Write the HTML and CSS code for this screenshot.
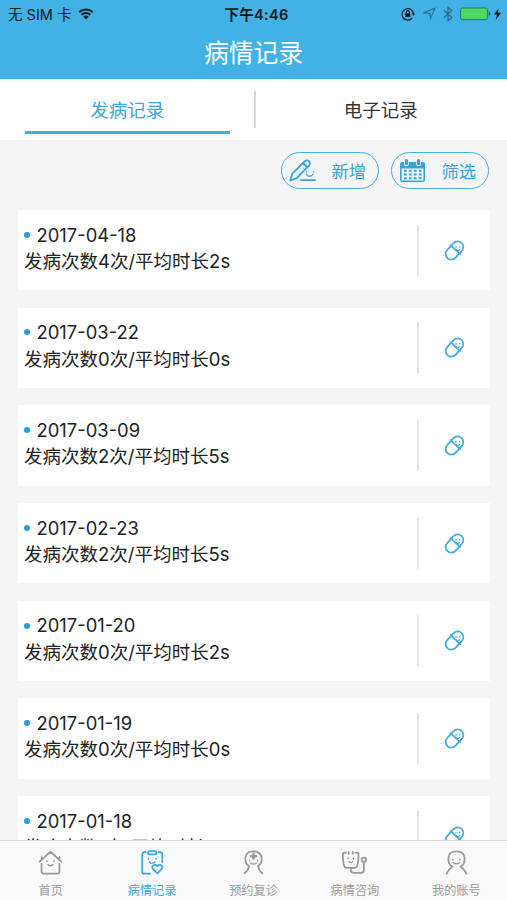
FILE: index.html
```html
<!DOCTYPE html>
<html lang="zh-CN">
<head>
    <meta charset="UTF-8">
    <meta name="viewport" content="width=device-width, initial-scale=1.0">
    <title>病情记录</title>
    <link rel="stylesheet" href="styles.css">
</head>
<body>
    <svg class="sprite" width="0" height="0">
        <symbol id="icon-pill" viewBox="0 0 24 24">
            <g transform="rotate(43 12 12)" fill="none" stroke="currentColor" stroke-width="1.8">
                <rect x="6.1" y="1.2" width="11.8" height="21.6" rx="5.9"/>
                <path d="M4.4 10.7h15.2"/>
            </g>
            <path d="M13.6 7.2v1.8M17.3 7.3v1.6M13.5 10.8c.8 1.8 3.1 1.7 3.9-.2" fill="none" stroke="currentColor" stroke-width="1.2"/>
        </symbol>
    </svg>
    <div class="app">
        <header class="header">
            <div class="status-bar">
                <div class="status-left">
                    <span>无 SIM 卡</span>
                    <svg class="wifi" width="16" height="12" viewBox="0 0 16 12">
                        <path d="M1.2 4.2a9.7 9.7 0 0 1 13.6 0M3.6 6.8a6.3 6.3 0 0 1 8.8 0" fill="none" stroke="#0b1a22" stroke-width="2"/>
                        <path d="M5.4 8.7a3.7 3.7 0 0 1 5.2 0L8 11.5z" fill="#0b1a22"/>
                    </svg>
                </div>
                <div class="status-time">下午4:46</div>
                <div class="status-right">
                    <svg width="15" height="14" viewBox="0 0 15 14" fill="none" stroke="#0b1a22" stroke-width="1.2">
                        <path d="M11.2 11a5.7 5.7 0 1 1 1.3-4"/>
                        <path d="M10.8 6.4h3.4l-1.7 2.3z" fill="#0b1a22" stroke="none"/>
                        <path d="M5.3 6.5V5.2a1.5 1.5 0 0 1 3 0v1.3"/>
                        <path d="M4.3 6.3h5v3.6h-5z" fill="#0b1a22" stroke="none"/>
                    </svg>
                    <svg width="13" height="13" viewBox="0 0 13 13" fill="none" stroke="#2c6d8e" stroke-width="1.1">
                        <path d="M11.9 1.2L7.6 11.6 6.7 6.4 1 5.7z"/>
                    </svg>
                    <svg width="10" height="16" viewBox="0 0 10 16" fill="none" stroke="#2c6d8e" stroke-width="1.3">
                        <path d="M.8 4.3l8 7.2L5 14.8V1.2l3.8 3.3-8 7.2"/>
                    </svg>
                    <svg width="42" height="14" viewBox="0 0 42 14">
                        <rect x=".6" y="1" width="27" height="11.6" rx="2" fill="#4cd964" stroke="#23766f"/>
                        <path d="M28.8 5c2 .3 2 3.3 0 3.6z" fill="#174b5d"/>
                        <path d="M38.8 1.2L34 7.6h3L35.800 12.800l5.200-7h-3.200z" fill="#0b1a22"/>
                    </svg>
                </div>
            </div>
            <h1 class="title">病情记录</h1>
        </header>

        <nav class="tabs">
            <div class="tab active"><span>发病记录</span></div>
            <div class="tab"><span>电子记录</span></div>
        </nav>

        <main class="content">
            <div class="actions">
                <button class="action-button">
                    <svg width="28" height="24" viewBox="0 0 28 24" fill="none" stroke="currentColor" stroke-width="1.8" stroke-linecap="round" stroke-linejoin="round">
                        <path d="M1.3 21.6l1.9-6.8L15.6 2.4a2.9 2.9 0 0 1 4.4-.2 3 3 0 0 1-.2 4.5L7.8 19.2z"/>
                        <path d="M14 4l4.3 4.3M12 21.2h14"/>
                        <path d="M17.5 15.2c.9 2.7 5.3 2.7 6.4 0M17.3 12.8v.2M24.7 12.8v.2" stroke-width="1.3"/>
                    </svg>
                    <span>新增</span>
                </button>
                <button class="action-button">
                    <svg width="28" height="24" viewBox="0 0 28 24">
                        <path d="M3 3h21a2 2 0 0 1 2 2v16a2 2 0 0 1-2 2H3a2 2 0 0 1-2-2V5a2 2 0 0 1 2-2z" fill="currentColor"/>
                        <path d="M2.6 9.5h21.8v12H2.6z" fill="#f5f5f5"/>
                        <path d="M5 11.7h17.5M5 15.5h17.5M5 19.3h17.5" stroke="currentColor" stroke-width="2" stroke-dasharray="2.8 2.1"/>
                        <path d="M7.5 1.5v3.2M19.5 1.5v3.2" stroke="#f5f5f5" stroke-width="5" stroke-linecap="round"/>
                        <path d="M7.5 1.8v2.7M19.5 1.8v2.7" stroke="currentColor" stroke-width="3.4" stroke-linecap="round"/>
                    </svg>
                    <span>筛选</span>
                </button>
            </div>

            <div class="record-list">
                <div class="record">
                    <div class="record-info">
                        <div class="record-date">2017-04-18</div>
                        <div class="record-text">发病次数4次/平均时长2s</div>
                    </div>
                    <div class="record-pill"><svg><use href="#icon-pill"/></svg></div>
                </div>
                <div class="record">
                    <div class="record-info">
                        <div class="record-date">2017-03-22</div>
                        <div class="record-text">发病次数0次/平均时长0s</div>
                    </div>
                    <div class="record-pill"><svg><use href="#icon-pill"/></svg></div>
                </div>
                <div class="record">
                    <div class="record-info">
                        <div class="record-date">2017-03-09</div>
                        <div class="record-text">发病次数2次/平均时长5s</div>
                    </div>
                    <div class="record-pill"><svg><use href="#icon-pill"/></svg></div>
                </div>
                <div class="record">
                    <div class="record-info">
                        <div class="record-date">2017-02-23</div>
                        <div class="record-text">发病次数2次/平均时长5s</div>
                    </div>
                    <div class="record-pill"><svg><use href="#icon-pill"/></svg></div>
                </div>
                <div class="record">
                    <div class="record-info">
                        <div class="record-date">2017-01-20</div>
                        <div class="record-text">发病次数0次/平均时长2s</div>
                    </div>
                    <div class="record-pill"><svg><use href="#icon-pill"/></svg></div>
                </div>
                <div class="record">
                    <div class="record-info">
                        <div class="record-date">2017-01-19</div>
                        <div class="record-text">发病次数0次/平均时长0s</div>
                    </div>
                    <div class="record-pill"><svg><use href="#icon-pill"/></svg></div>
                </div>
                <div class="record">
                    <div class="record-info">
                        <div class="record-date">2017-01-18</div>
                        <div class="record-text">发病次数1次/平均时长1s</div>
                    </div>
                    <div class="record-pill"><svg><use href="#icon-pill"/></svg></div>
                </div>
            </div>
        </main>

        <footer class="tab-bar">
            <a class="bar-item">
                <svg viewBox="0 0 28 28">
                    <path d="M1.8 13L14 2l12.200 11M4 15.500V24a2.500 2.500 0 0 0 2.500 2.500h15A2.500 2.500 0 0 0 24 24v-8.500M4 8v2.500M24 8v2.500"/>
                    <path d="M10 12v1M18 12v1M11 16.200c1.200 1.900 4.800 1.900 6 0" class="face"/>
                </svg>
                <span>首页</span>
            </a>
            <a class="bar-item active">
                <svg viewBox="0 0 28 28">
                    <path d="M6.500 2.500H5A2.500 2.500 0 0 0 2.500 5v19A2.500 2.500 0 0 0 5 26.500h6M21 2.500h1.500A2.500 2.500 0 0 1 25 5v8.500"/>
                    <rect x="9" y="1.200" width="9.500" height="3.600" rx="1.800"/>
                    <path d="M9.500 9.500v.8M18 9.500v.8M10.500 13.200c1.300 2 5 2 6.300 0" class="face"/>
                    <path d="M19.500 26.200l-5-5c-2.500-3.600 2.500-6.600 5-3 2.500-3.600 7.500-.6 5 3z"/>
                </svg>
                <span>病情记录</span>
            </a>
            <a class="bar-item">
                <svg viewBox="0 0 28 28">
                    <path d="M4 26c2.500-2 4.500-5 5-8-3.500-2-4.500-5-4-9.500.5-5 4-7 9-7s8.500 2 9 7c.5 4.500-.5 7.500-4 9.500.5 3 2.500 6 5 8"/>
                    <path d="M14 4v6M11 7h6" stroke-width="2.600"/>
                    <path d="M9.500 11.500v.8M18.500 11.500v.8M11 14.500c1.500 1.700 4.500 1.700 6 0" class="face"/>
                </svg>
                <span>预约复诊</span>
            </a>
            <a class="bar-item">
                <svg viewBox="0 0 28 28">
                    <path d="M4.500 3H3a2 2 0 0 0-2 2c0 6 .5 10 1.500 13 .6 1.500 1.500 2 3 2h8.500c1.500 0 2.400-.5 3-2 1-3 1.500-7 1.500-13a2 2 0 0 0-2-2H15M7.500 2.200v2M12 2.200v2"/>
                    <path d="M10 20v2.500a3 3 0 0 0 3 3h8c2 0 3.500-1.500 3.500-3.500v-8"/>
                    <circle cx="24.500" cy="11" r="2.500"/>
                    <path d="M6.800 9v.8M12.800 9v.8M7.800 13c1.200 1.200 2.900 1.200 4.100 0" class="face"/>
                </svg>
                <span>病情咨询</span>
            </a>
            <a class="bar-item">
                <svg viewBox="0 0 28 28">
                    <path d="M3 26.500c1-3.500 3.500-5.500 6.500-8-4-2-5-5.500-4.500-10 .5-5 4-7 9-7s8.500 2 9 7c.5 4.500-.5 8-4.500 10 3 2.500 5.500 4.500 6.500 8"/>
                    <path d="M10 10.500v.8M18 10.500v.8M10.500 14c1.500 2 5.500 2 7 0" class="face"/>
                </svg>
                <span>我的账号</span>
            </a>
        </footer>
    </div>
</body>
</html>
```
FILE: styles.css
```css
* {
    box-sizing: border-box;
}
body {
    margin: 0;
    font-family: Inter, "Noto Sans CJK SC", sans-serif;
    background-color: #f5f5f5;
    color: #222;
}
.sprite {
    display: block;
}
.app {
    display: flex;
    flex-direction: column;
    height: 100vh;
    overflow: hidden;
}
.header {
    flex: none;
    height: 79px;
    background-color: #42b1e5;
    color: #0b1a22;
}
.status-bar {
    display: grid;
    grid-template-columns: 1fr auto 1fr;
    align-items: center;
    height: 27px;
    padding: 0 5px 0 8px;
    font-size: 14.5px;
}
.status-left {
    display: flex;
    align-items: center;
    gap: 7px;
}
.status-time {
    padding-left: 3px;
    font-weight: 600;
    letter-spacing: 0.3px;
}
.status-right {
    display: flex;
    align-items: center;
    justify-content: flex-end;
    gap: 7px;
}
.title {
    margin: 0;
    color: #fff;
    font-size: 24.8px;
    font-weight: 400;
    line-height: 52px;
    text-align: center;
}
.tabs {
    flex: none;
    display: flex;
    height: 61px;
    background-color: #fff;
}
.tab {
    flex: 1 1 0;
    min-width: 0;
    display: flex;
    padding: 0 24px 6px 25px;
    font-size: 18.5px;
    color: #333;
    background: linear-gradient(#d5d8db, #d5d8db) no-repeat left 12px / 0 37px;
}
.tab + .tab {
    background-size: 2px 37px;
}
.tab span {
    flex: 1;
    line-height: 63px;
    text-align: center;
}
.tab.active {
    color: #36a9e1;
}
.tab.active span {
    height: 55px;
    border-bottom: 3px solid #42aee0;
}
.content {
    flex: 1;
    min-height: 0;
    padding: 12px 17px 0 18px;
    overflow: hidden;
}
.actions {
    display: flex;
    justify-content: flex-end;
    gap: 12px;
    height: 37px;
    margin: 0 1px 21px 0;
}
.action-button {
    display: flex;
    align-items: center;
    justify-content: space-between;
    width: 98px;
    padding: 0 12px 0 7px;
    border: 1.5px solid #45aee0;
    border-radius: 19px;
    background: none;
    color: #36a3db;
    font-family: inherit;
    font-size: 17.3px;
}
.record-list {
    display: flex;
    flex-direction: column;
    gap: 17.4px;
}
.record {
    flex: none;
    display: flex;
    align-items: center;
    height: 80.3px;
    background-color: #fff;
}
.record-info {
    flex: 1;
    padding: 0 0 4.4px 6px;
    font-size: 18.5px;
    line-height: 26.4px;
}
.record-date {
    display: flex;
    align-items: center;
    gap: 6.5px;
    font-size: 18.4px;
}
.record-date::before {
    content: "";
    width: 6px;
    height: 6px;
    border-radius: 50%;
    background-color: #20a0dc;
}
.record-pill {
    display: flex;
    align-items: center;
    justify-content: center;
    width: 73px;
    height: 51px;
    border-left: 2px solid #e1e3e5;
    color: #45aae0;
}
.record-pill svg {
    width: 23px;
    height: 23px;
}
.tab-bar {
    flex: none;
    display: flex;
    height: 60px;
    border-top: 1px solid #d5d5d5;
    background-color: #f9f9f9;
}
.bar-item {
    flex: 1;
    display: flex;
    flex-direction: column;
    align-items: center;
    padding-top: 9px;
    color: #999;
    font-size: 12.2px;
    line-height: 18px;
}
.bar-item svg {
    width: 27px;
    height: 27px;
    margin-bottom: 7px;
    fill: none;
    stroke: currentColor;
    stroke-width: 2;
    stroke-linecap: round;
    stroke-linejoin: round;
}
.bar-item .face {
    stroke-width: 1.5;
}
.bar-item.active {
    color: #36a9e1;
}
```
